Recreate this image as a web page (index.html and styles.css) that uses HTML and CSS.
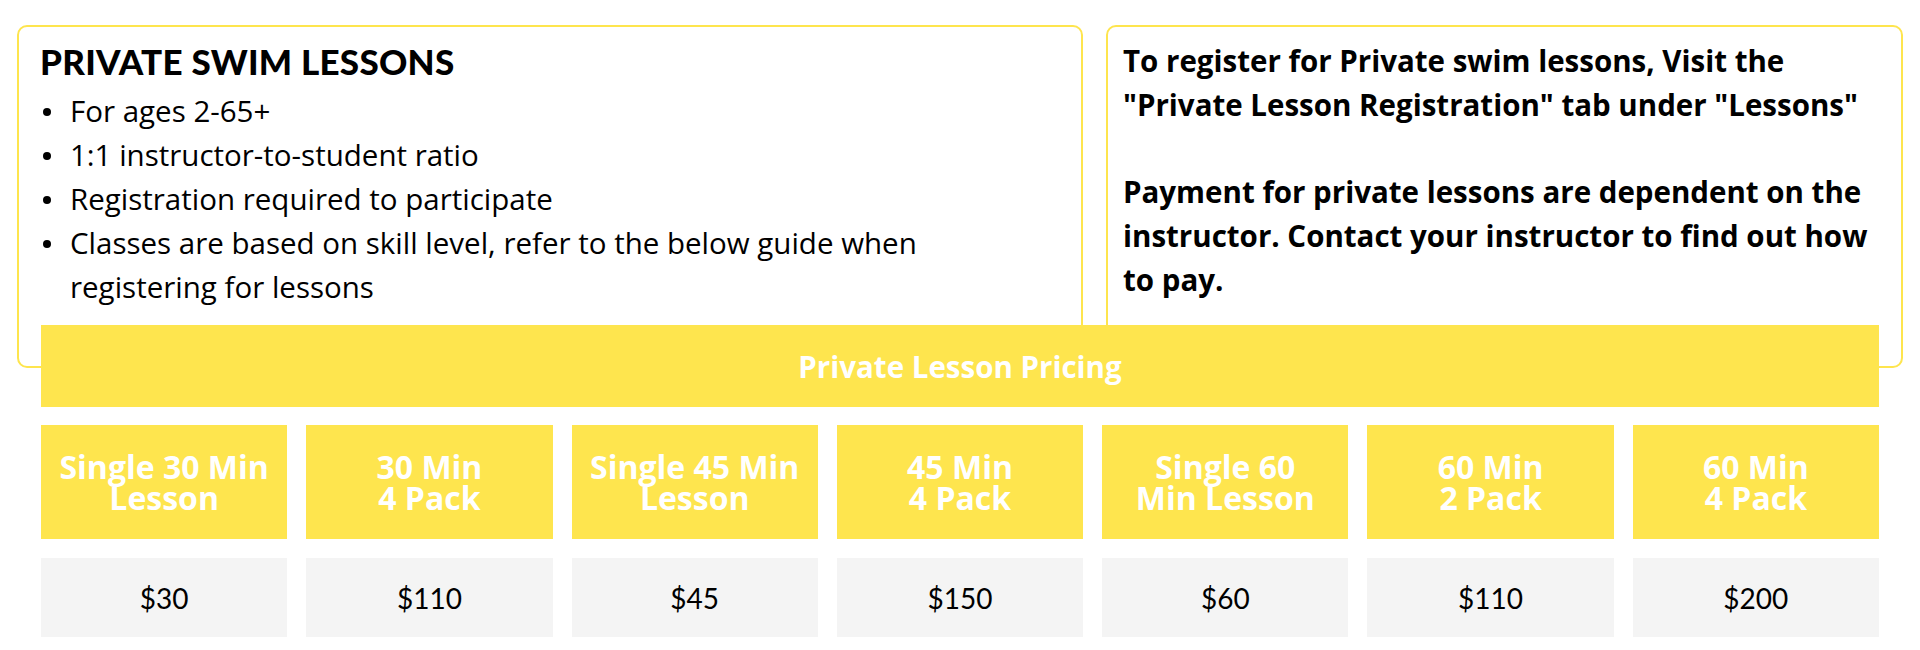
FILE: index.html
```html
<!DOCTYPE html>
<html lang="en">
<head>
<meta charset="utf-8">
<title>Private Swim Lessons</title>
<link rel="stylesheet" href="styles.css">
</head>
<body>
<div class="page">
  <div class="cards">
    <section class="card card-info">
      <h2 class="card-title">PRIVATE SWIM LESSONS</h2>
      <ul class="info-list">
        <li>For ages 2-65+</li>
        <li>1:1 instructor-to-student ratio</li>
        <li>Registration required to participate</li>
        <li><span>Classes are based on skill level, refer to the below guide when<br>registering for lessons</span></li>
      </ul>
    </section>
    <section class="card card-reg">
      <p class="reg-text">To register for Private swim lessons, Visit the<br>"Private Lesson Registration" tab under "Lessons"</p>
      <p class="reg-text">Payment for private lessons are dependent on the<br>instructor. Contact your instructor to find out how<br>to pay.</p>
    </section>
  </div>
  <div class="pricing">
    <div class="pricing-title">Private Lesson Pricing</div>
    <div class="pricing-grid">
      <div class="pkg">Single 30 Min<br>Lesson</div>
      <div class="pkg">30 Min<br>4 Pack</div>
      <div class="pkg">Single 45 Min<br>Lesson</div>
      <div class="pkg">45 Min<br>4 Pack</div>
      <div class="pkg">Single 60<br>Min Lesson</div>
      <div class="pkg">60 Min<br>2 Pack</div>
      <div class="pkg">60 Min<br>4 Pack</div>
      <div class="price">$30</div>
      <div class="price">$110</div>
      <div class="price">$45</div>
      <div class="price">$150</div>
      <div class="price">$60</div>
      <div class="price">$110</div>
      <div class="price">$200</div>
    </div>
  </div>
</div>
</body>
</html>
```

FILE: styles.css
```css
* { box-sizing: border-box; }

body {
  margin: 0;
  background: #ffffff;
  color: #000000;
  font-family: "Open Sans", Lato, sans-serif;
}

.page {
  padding: 25px 17px 0;
}

.cards {
  display: grid;
  grid-template-columns: 1066fr 797fr;
  gap: 23px;
}

.card {
  height: 343px;
  border: 2px solid #fee54e;
  border-radius: 10px;
}

.card-info {
  padding: 12px 22px 0 21px;
}

.card-title {
  margin: 0;
  font-family: Lato, "Open Sans", sans-serif;
  font-size: 35px;
  font-weight: 900;
  line-height: 44px;
  letter-spacing: 0.25px;
}

.info-list {
  margin: 6px 0 0;
  padding: 0;
  list-style: none;
  font-size: 29.5px;
  line-height: 44px;
}

.info-list li {
  display: flex;
  align-items: flex-start;
}

.info-list li::before {
  content: "";
  flex: none;
  width: 8px;
  height: 8px;
  margin: 19px 19px 0 3px;
  border-radius: 50%;
  background: #000000;
}

.card-reg {
  padding: 12px 17px 0 15px;
}

.reg-text {
  margin: 0 0 43px;
  font-size: 29.5px;
  font-weight: 700;
  line-height: 44px;
}

.pricing {
  margin: -43px 24px 0;
  position: relative;
}

.pricing-title {
  height: 82px;
  display: flex;
  align-items: center;
  justify-content: center;
  background: #fee54e;
  color: #ffffff;
  font-size: 29.5px;
  font-weight: 700;
}

.pricing-grid {
  margin-top: 18px;
  display: grid;
  grid-template-columns: repeat(7, 1fr);
  column-gap: 19px;
  row-gap: 19px;
}

.pkg {
  height: 114px;
  display: flex;
  align-items: center;
  justify-content: center;
  text-align: center;
  background: #fee54e;
  color: #ffffff;
  font-size: 32px;
  font-weight: 700;
  line-height: 31px;
}

.price {
  height: 79px;
  display: flex;
  align-items: center;
  justify-content: center;
  background: #f4f4f4;
  font-family: Lato, "Open Sans", sans-serif;
  font-size: 28px;
}
```
